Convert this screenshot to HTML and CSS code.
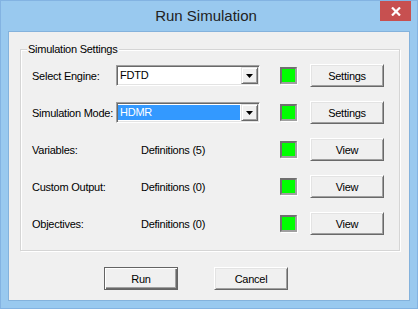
FILE: index.html
```html
<!DOCTYPE html>
<html lang="en">
<head>
  <meta charset="UTF-8" />
  <title>Run Simulation</title>
  <link rel="stylesheet" href="styles.css">
</head>
<body>
  <div class="window">
    <div class="titlebar">
      <span></span>
      <div class="title">Run Simulation</div>
      <button class="close" title="Close">
        <svg width="10" height="9" viewBox="0 0 10 9">
          <path d="M1 0.5 L9 8.5 M9 0.5 L1 8.5" stroke="#fff" stroke-width="2.2" fill="none"/>
        </svg>
      </button>
    </div>

    <div class="client">
      <div class="group">
        <span class="legend">Simulation Settings</span>
        <div class="rows">
          <label>Select Engine:</label>
          <div class="combo">
            <span class="value">FDTD</span>
            <span class="drop"><svg width="7" height="4" viewBox="0 0 7 4"><path d="M0 0 H7 L3.5 4 Z" fill="#000"/></svg></span>
          </div>
          <span class="led"></span>
          <button class="btn">Settings</button>

          <label>Simulation Mode:</label>
          <div class="combo">
            <span class="value selected">HDMR</span>
            <span class="drop"><svg width="7" height="4" viewBox="0 0 7 4"><path d="M0 0 H7 L3.5 4 Z" fill="#000"/></svg></span>
          </div>
          <span class="led"></span>
          <button class="btn">Settings</button>

          <label>Variables:</label>
          <span class="defs">Definitions (5)</span>
          <span class="led"></span>
          <button class="btn">View</button>

          <label>Custom Output:</label>
          <span class="defs">Definitions (0)</span>
          <span class="led"></span>
          <button class="btn">View</button>

          <label>Objectives:</label>
          <span class="defs">Definitions (0)</span>
          <span class="led"></span>
          <button class="btn">View</button>
        </div>
      </div>

      <div class="actions">
        <button class="btn default">Run</button>
        <button class="btn">Cancel</button>
      </div>
    </div>
  </div>
</body>
</html>
```

FILE: styles.css
```css
body {
  margin: 0;
  background: #ffffff;
  font-family: 'Liberation Sans', Arial, sans-serif;
  font-size: 11px;
  letter-spacing: -0.25px;
  color: #000;
}

.window {
  width: 418px;
  height: 309px;
  box-sizing: border-box;
  border: 1px solid #83b3e2;
  background: #99c9ef;
  display: flex;
  flex-direction: column;
}

.titlebar {
  height: 30px;
  display: grid;
  grid-template-columns: 1fr auto 1fr;
  padding-right: 6px;
}

.title {
  font-size: 15px;
  letter-spacing: 0;
  line-height: 30px;
  color: #222;
}

.close {
  justify-self: end;
  width: 31px;
  height: 20px;
  border: none;
  padding: 0;
  background: #c75050;
  display: flex;
  align-items: center;
  justify-content: center;
}

.client {
  margin: 0 7px 7px;
  flex: 1;
  background: #f0f0f0;
  border: 1px solid #84b2dc;
}

.group {
  position: relative;
  margin: 17px 0 0 11px;
  width: 380px;
  height: 202px;
  box-sizing: border-box;
  border: 1px solid #d5d5d5;
  box-shadow: inset 1px 1px 0 #fff, 1px 1px 0 #fff;
  padding: 14px 0 0 11px;
}

.legend {
  position: absolute;
  top: -8px;
  left: 6px;
  padding: 0 2px 0 1px;
  background: #f0f0f0;
  line-height: 14px;
}

.rows {
  display: grid;
  grid-template-columns: 84px 164px 30px 74px;
  grid-auto-rows: 23px;
  row-gap: 14px;
  align-items: center;
}

.rows label,
.defs {
  white-space: nowrap;
}

.combo {
  width: 144px;
  height: 21px;
  box-sizing: border-box;
  display: flex;
  background: #fff;
  border: 1px solid;
  border-color: #a0a0a0 #fff #fff #a0a0a0;
  box-shadow: inset 1px 1px 0 #696969, inset -1px -1px 0 #e3e3e3;
  padding: 1px;
}

.value {
  flex: 1;
  padding-left: 2px;
  margin: 1px 1px 1px 0;
  line-height: 15px;
}

.value.selected {
  background: #3399ff;
  color: #fff;
}

.drop {
  width: 17px;
  height: 17px;
  box-sizing: border-box;
  background: #f0f0f0;
  border: 1px solid;
  border-color: #e3e3e3 #696969 #696969 #e3e3e3;
  box-shadow: inset 1px 1px 0 #fff, inset -1px -1px 0 #a0a0a0;
  display: flex;
  align-items: center;
  justify-content: center;
}

.defs {
  padding-left: 25px;
}

.led {
  width: 17px;
  height: 17px;
  box-sizing: border-box;
  background: #00ff00;
  border: 2px solid;
  border-color: #6f6f6f #a0a0a0 #a0a0a0 #6f6f6f;
  box-shadow: 1px 1px 0 #fff;
}

.btn {
  width: 74px;
  height: 23px;
  box-sizing: border-box;
  font-family: inherit;
  font-size: 11px;
  letter-spacing: inherit;
  color: #000;
  padding: 0;
  background: #f0f0f0;
  border: 1px solid;
  border-color: #fff #696969 #696969 #fff;
  box-shadow: inset 1px 1px 0 #e3e3e3, inset -1px -1px 0 #a0a0a0;
}

.btn.default {
  border: 1px solid #646464;
  box-shadow: inset 1px 1px 0 #fff, inset -1px -1px 0 #696969, inset -2px -2px 0 #a0a0a0;
}

.actions {
  display: flex;
  gap: 36px;
  padding: 16px 0 0 95px;
}
```
